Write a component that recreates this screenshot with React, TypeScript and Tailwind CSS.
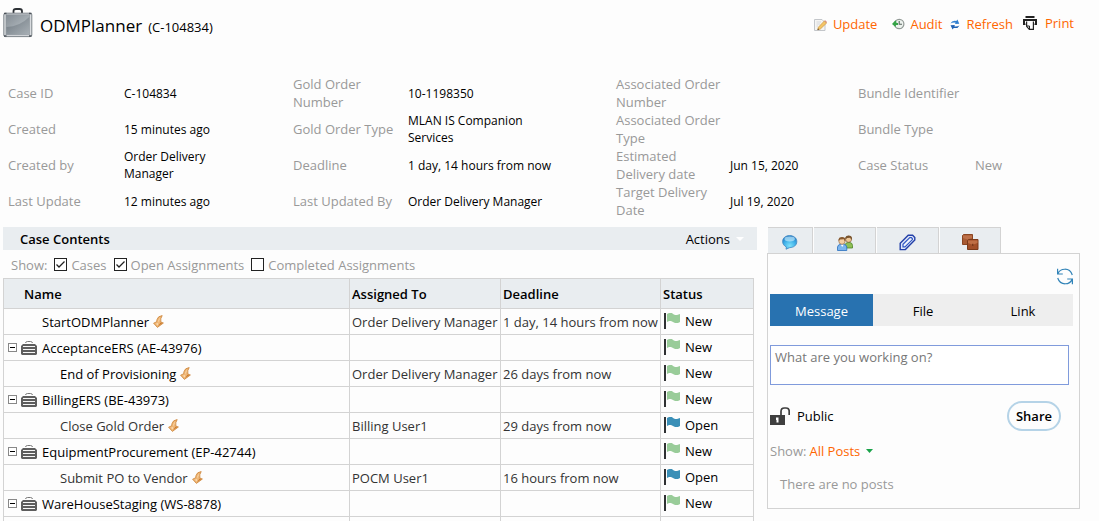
import React from "react";

type Field = { label: string; value: string; muted?: boolean };
type Row = { kind: "task" | "case"; depth?: number; name: string; soft?: boolean; assigned?: string; deadline?: string; status: "New" | "Open" };

const fields: Field[] = [
  { label: "Case ID", value: "C-104834" },
  { label: "Gold Order Number", value: "10-1198350" },
  { label: "Associated Order Number", value: "" },
  { label: "Bundle Identifier", value: "" },
  { label: "Created", value: "15 minutes ago" },
  { label: "Gold Order Type", value: "MLAN IS Companion Services" },
  { label: "Associated Order Type", value: "" },
  { label: "Bundle Type", value: "" },
  { label: "Created by", value: "Order Delivery Manager" },
  { label: "Deadline", value: "1 day, 14 hours from now" },
  { label: "Estimated Delivery date", value: "Jun 15, 2020" },
  { label: "Case Status", value: "New", muted: true },
  { label: "Last Update", value: "12 minutes ago" },
  { label: "Last Updated By", value: "Order Delivery Manager" },
  { label: "Target Delivery Date", value: "Jul 19, 2020" },
];

const rows: Row[] = [
  { kind: "task", name: "StartODMPlanner", assigned: "Order Delivery Manager", deadline: "1 day, 14 hours from now", status: "New" },
  { kind: "case", name: "AcceptanceERS (AE-43976)", status: "New" },
  { kind: "task", depth: 1, name: "End of Provisioning", assigned: "Order Delivery Manager", deadline: "26 days from now", status: "New" },
  { kind: "case", name: "BillingERS (BE-43973)", status: "New" },
  { kind: "task", depth: 1, name: "Close Gold Order", soft: true, assigned: "Billing User1", deadline: "29 days from now", status: "Open" },
  { kind: "case", name: "EquipmentProcurement (EP-42744)", status: "New" },
  { kind: "task", depth: 1, name: "Submit PO to Vendor", soft: true, assigned: "POCM User1", deadline: "16 hours from now", status: "Open" },
  { kind: "case", name: "WareHouseStaging (WS-8878)", status: "New" },
];

function Suitcase() {
  return (
    <svg width="30" height="30" viewBox="0 0 30 30" aria-hidden="true">
      <defs>
        <linearGradient id="caseBody" x1="0" y1="0" x2="1" y2="1">
          <stop offset="0" stopColor="#858d94" />
          <stop offset="0.5" stopColor="#a3abb1" />
          <stop offset="1" stopColor="#b2b9be" />
        </linearGradient>
        <linearGradient id="caseShade" x1="0" y1="0" x2="1" y2="1">
          <stop offset="0" stopColor="#5c666f" />
          <stop offset="1" stopColor="#a3abb1" />
        </linearGradient>
      </defs>
      <path d="M10.5 5V3.2Q10.5 1 13 1H16.5Q19 1 19 3.2V5" fill="none" stroke="#2d3136" strokeWidth="1.8" />
      <rect x="0.8" y="5.2" width="28" height="23.4" rx="1.6" fill="#d9dcdf" stroke="#7e858b" />
      <rect x="3" y="6.8" width="23.6" height="20" fill="url(#caseBody)" stroke="#8b939a" strokeWidth="0.6" />
      <path d="M3.4 26.4V19Q17 18.5 26.2 9V26.4Z" fill="url(#caseShade)" opacity="0.7" />
      <path d="M1 5.5H3.5M26 5.5H28.5M1 28H3.5M26 28H28.5" stroke="#4b5259" strokeWidth="1.4" />
    </svg>
  );
}

function UpdateIcon() {
  return (
    <svg width="13" height="13" viewBox="0 0 13 13" aria-hidden="true">
      <path d="M0.5 1.5H8L11 4.5V12.5H0.5Z" fill="#f5f5f3" stroke="#c3c6ca" />
      <path d="M2.5 4H7M2.5 6H6M2.5 8H4" stroke="#d5d7db" />
      <path d="M10.3 3L12.6 5L6.4 11L3.8 11.8L4.4 9.2Z" fill="#f4c566" stroke="#cf9a40" strokeWidth="0.7" />
      <path d="M3.4 12L4 10.2L5.2 11.4Z" fill="#59422b" />
      <path d="M10.2 3L11.2 2.2L13 4L12.4 5Z" fill="#d98f7c" />
    </svg>
  );
}

function AuditIcon() {
  return (
    <svg width="13" height="12" viewBox="0 0 13 12" aria-hidden="true">
      <circle cx="7.2" cy="6" r="4.7" fill="#edf2ee" stroke="#929a96" strokeWidth="1.2" />
      <path d="M7.2 3V6.2H10" fill="none" stroke="#596660" strokeWidth="1.1" />
      <path d="M3.3 2.4L4.4 3.5V5H6V7H4L3.5 9L0 6Z" fill="#35a347" />
    </svg>
  );
}

function RefreshSmall() {
  return (
    <svg width="10" height="11" viewBox="0 0 10 11" aria-hidden="true">
      <path d="M0.5 4.5Q2 1.2 6.3 2L7.4 0.6L9.3 4.7L4.8 5L5.8 3.7Q3 3 0.5 4.5Z" fill="#2f7fd0" />
      <path d="M9.5 6.4Q8 9.7 3.7 9L2.6 10.4L0.5 6.3L5 6L4.2 7.3Q7 8 9.5 6.4Z" fill="#1f62b4" />
    </svg>
  );
}

function PrintIcon() {
  return (
    <svg width="14" height="14" viewBox="0 0 14 14" aria-hidden="true">
      <path d="M2.5 0H11.5V2H2.5ZM0 3H14V9H11.5V7.5H12V5H2V7.5H2.5V9H0Z" fill="#222" />
      <path d="M3.6 5.5V10.3L6.3 13.3H10.4V5.5" fill="#fdfdfd" stroke="#222" strokeWidth="1.2" />
      <path d="M4 10H6.5V13" fill="none" stroke="#222" />
    </svg>
  );
}

function Bolt() {
  return (
    <svg width="11" height="13" viewBox="0 0 11 13" aria-hidden="true">
      <path d="M9.2 0.6Q5 1 4 4.5L3.6 6.8L0.6 8.2L4.4 12.4L10.4 8L7.8 7Q7.2 3.4 9.2 0.6Z" fill="#efb676" stroke="#cb8438" strokeWidth="0.8" />
      <path d="M7.2 2.2Q5.2 4 5.4 8L3 8.8L4.5 10.6Z" fill="#fbe0b8" />
      <path d="M7.6 7.4L9.4 8.1L5 11.3Z" fill="#c97a2c" />
    </svg>
  );
}

function CaseIcon() {
  return (
    <svg width="16" height="14" viewBox="0 0 16 14" aria-hidden="true">
      <path d="M4.5 2Q4.8 0.5 6.5 0.5H9.5Q11.2 0.5 11.5 2" fill="none" stroke="#777" />
      <path d="M2 3H14L16 5V13L15 14H1L0 13V5Z" fill="#5d5d5d" />
      <path d="M2 5.5H14M2 8.5H14M2 11.5H14" stroke="#f6f6f6" />
    </svg>
  );
}

function Flag({ status }: { status: "New" | "Open" }) {
  return (
    <svg width="17" height="16" viewBox="0 0 17 16" aria-hidden="true">
      <path d="M1 0H3V16H1Z" fill="#2f3133" />
      <path d="M4 1L6 0H9L10 1L12 2H14L17 1V9L15 10H12L10 9L8 8H6L4 9Z" fill={status === "New" ? "#99cc99" : "#3a8fb7"} />
    </svg>
  );
}

function ChatIcon() {
  return (
    <svg width="16" height="15" viewBox="0 0 16 15" aria-hidden="true">
      <defs>
        <radialGradient id="bubble" cx="0.5" cy="0.75" r="0.7">
          <stop offset="0" stopColor="#7fe2fb" />
          <stop offset="0.6" stopColor="#3fb0e8" />
          <stop offset="1" stopColor="#2780c8" />
        </radialGradient>
      </defs>
      <path d="M7.6 0.6C11.8 0.6 14.8 3 14.8 6.6C14.8 10.2 11.8 12.6 7.8 12.6L4 14.2L4.4 12C2.2 11 0.6 9 0.6 6.6C0.6 3 3.6 0.6 7.6 0.6Z" fill="url(#bubble)" stroke="#3d88c2" strokeWidth="0.8" />
      <ellipse cx="7.7" cy="4" rx="5.2" ry="2.4" fill="#d4f2fd" opacity="0.6" />
    </svg>
  );
}

function PeopleIcon() {
  return (
    <svg width="16" height="16" viewBox="0 0 16 16" aria-hidden="true">
      <path d="M8 14V10Q8.5 7.5 11 7.5H13Q15.5 8 15.5 10.5V13H9Z" fill="#8fbf55" stroke="#4c8527" strokeWidth="0.8" />
      <circle cx="11.6" cy="4.3" r="3" fill="#efc797" stroke="#73502e" strokeWidth="0.6" />
      <path d="M8.3 4.5V2.5Q9 0.5 11.5 0.5Q15 0.5 15 3.8L14.2 5L13.3 2.8L10.2 3Z" fill="#79542d" />
      <path d="M0.5 15.5V12Q1 9.5 3.5 9.3H6.5Q9.5 9.5 9.8 12V15.5Z" fill="#7bb5ee" stroke="#2a6ebe" strokeWidth="0.8" />
      <path d="M3.8 9.5L5.2 12L6.7 9.5Z" fill="#fff" />
      <circle cx="5" cy="6.1" r="3.2" fill="#f5cfa3" stroke="#885c34" strokeWidth="0.6" />
      <path d="M1.5 6V4.2Q2 2 5 2Q8.5 2 8.5 5.4L7.9 6.4L6.9 4.3L3 4.6Z" fill="#87592f" />
    </svg>
  );
}

function ClipIcon() {
  return (
    <svg width="17" height="17" viewBox="0 0 17 17" aria-hidden="true">
      <path d="M1.2 15.6V9.2L9.2 1.2H13.6L15.8 3.6V6L6.4 15.6Z" fill="#dfe6f7" stroke="#2340a8" strokeWidth="1.4" />
      <path d="M4 12.9V10.2L10.8 3.6H12.4L13.4 4.8V5.6L6 12.9Z" fill="#f0f4fc" stroke="#2f56c4" strokeWidth="1.2" />
    </svg>
  );
}

function BoxesIcon() {
  return (
    <svg width="17" height="17" viewBox="0 0 17 17" aria-hidden="true">
      <path d="M0.5 1.5L1.5 0.5H10.5V10.5H0.5Z" fill="#a85a33" stroke="#8a4522" />
      <path d="M1 1.5H10V4L5.5 5.5L1 4Z" fill="#bd7049" />
      <path d="M5.5 6.5L6.5 5.5H16V15.5H5.5Z" fill="#a24f28" stroke="#7c3a19" />
      <path d="M6 6.5H15.5V9L10.8 10.8L6 9Z" fill="#bf6f45" />
      <path d="M10.8 9.8V11.8" stroke="#5e290f" />
    </svg>
  );
}

function SyncIcon() {
  return (
    <svg width="16" height="17" viewBox="0 0 16 17" fill="none" stroke="#3284b8" strokeWidth="1.2" aria-hidden="true">
      <path d="M0.6 0.8V6H5.8M0.9 5.8C3 0.2 12.5-1.2 15.3 7" />
      <path d="M15.4 16.2V11H10.2M15.1 11.2C13 16.8 3.5 18.2 0.7 10" />
    </svg>
  );
}

function LockIcon() {
  return (
    <svg width="20" height="18" viewBox="0 0 20 18" aria-hidden="true">
      <path d="M0 8H15V18H0Z" fill="#3f3f3f" />
      <path d="M11 8V4.5Q11 1 14.3 1H16Q19.2 1 19.2 4.5V8" fill="none" stroke="#3f3f3f" strokeWidth="1.7" />
      <path d="M6 10.5H8.5V15.5H6.5V13H6Z" fill="#fff" />
    </svg>
  );
}

function Check({ label, checked }: { label: string; checked?: boolean }) {
  return (
    <label className="flex items-center gap-1">
      <span className="relative flex size-[13px]">
        <input type="checkbox" defaultChecked={checked} className="peer size-[13px] appearance-none border border-[#222] bg-white" />
        <svg viewBox="0 0 13 13" className="pointer-events-none absolute inset-0 hidden peer-checked:block" aria-hidden="true">
          <path d="M2.5 6.5L5 9L10.5 3.5" fill="none" stroke="#222" strokeWidth="1.3" />
        </svg>
      </span>
      {label}
    </label>
  );
}

const cell = "h-[26px] border border-[#d3d3d3] p-0 pl-[2px] text-left whitespace-nowrap";
const head = "h-[30px] border border-[#d3d3d3] bg-[#e9edf0] p-0 pl-[2px] text-left font-semibold";
const tab = "flex h-[26px] items-center justify-center border-t border-r border-[#d3d3d3] bg-[#e9edf0] pt-1";

export default function App() {
  return (
    <div className="h-screen overflow-hidden bg-[#fdfdfd] pl-[3px] font-['Open_Sans',sans-serif] text-[13px] leading-[18px] text-black">
      <header className="flex h-[75px] items-start justify-between pr-[25px]">
        <div className="flex items-start gap-[7px] pt-2">
          <Suitcase />
          <div className="flex items-baseline gap-[6px] pt-[6px]">
            <h1 className="text-[17px] leading-[24px]">ODMPlanner</h1>
            <span>(C-104834)</span>
          </div>
        </div>
        <nav className="flex items-start gap-2 pt-[15px] text-[#ff6600]">
          <a href="#update" className="mr-[7px] flex items-center gap-[6px]"><UpdateIcon />Update</a>
          <a href="#audit" className="flex items-center gap-[5px]"><AuditIcon />Audit</a>
          <a href="#refresh" className="mr-[2px] flex items-center gap-[6px]"><RefreshSmall />Refresh</a>
          <a href="#print" className="-mt-px flex items-center gap-2"><PrintIcon />Print</a>
        </nav>
      </header>

      <dl className="grid auto-rows-[36px] grid-cols-[116fr_169fr_115fr_208fr_114fr_128fr_117fr_124fr] items-center pl-[5px]">
        {fields.map((f) => (
          <React.Fragment key={f.label}>
            <dt className="pr-1 text-[#999]">{f.label}</dt>
            <dd className={f.muted ? "pr-12 text-[#999]" : "pr-12 text-[12px] leading-[17px] empty:pr-0"}>{f.value}</dd>
          </React.Fragment>
        ))}
      </dl>

      <main className="mt-2 flex items-start gap-[10px] pr-[19px]">
        <section className="min-w-0 flex-1">
          <div className="flex h-[23px] items-center justify-between bg-[#e9edf0] pr-[13px] pl-[17px]">
            <h2 className="font-semibold">Case Contents</h2>
            <button type="button" className="flex items-center gap-[6px]">
              Actions
              <svg width="8" height="4" viewBox="0 0 8 4" aria-hidden="true"><path d="M0 0H8L4 4Z" fill="#fff" /></svg>
            </button>
          </div>
          <div className="flex h-[28px] items-center gap-[7px] pt-px pl-2 text-[#999]">
            <span>Show:</span>
            <Check label="Cases" checked />
            <Check label="Open Assignments" checked />
            <Check label="Completed Assignments" />
          </div>
          <div className="pr-[3px]">
            <table className="w-full table-fixed border-collapse">
              <colgroup>
                <col />
                <col className="w-[151px]" />
                <col className="w-[160px]" />
                <col className="w-[93px]" />
              </colgroup>
              <thead>
                <tr>
                  <th className={head}><span className="pl-[18px]">Name</span></th>
                  <th className={head}>Assigned To</th>
                  <th className={head}>Deadline</th>
                  <th className={head}>Status</th>
                </tr>
              </thead>
              <tbody>
                {rows.map((r) => (
                  <tr key={r.name}>
                    <td className={cell}>
                      {r.kind === "case" ? (
                        <div className="flex items-center pl-[2px]">
                          <button type="button" aria-label="Collapse" className="mr-1 flex size-[9px] items-center justify-center border border-[#888] bg-white">
                            <span className="h-px w-[5px] bg-black" />
                          </button>
                          <CaseIcon />
                          <span className="pl-[5px]">{r.name}</span>
                        </div>
                      ) : (
                        <div className={r.depth ? "flex items-center gap-[4px] pl-[54px]" : "flex items-center gap-[4px] pl-[36px]"}>
                          <span className={r.soft ? "text-[#333]" : ""}>{r.name}</span>
                          <Bolt />
                        </div>
                      )}
                    </td>
                    <td className={`${cell} text-[#333]`}>{r.assigned}</td>
                    <td className={`${cell} text-[#333]`}>{r.deadline}</td>
                    <td className={cell}>
                      <div className="flex items-center gap-[5px] pb-[2px]"><Flag status={r.status} />{r.status}</div>
                    </td>
                  </tr>
                ))}
                <tr><td className={cell} /><td className={cell} /><td className={cell} /><td className={cell} /></tr>
              </tbody>
            </table>
          </div>
        </section>

        <aside className="w-[313px] shrink-0">
          <div className="flex gap-px pl-px">
            <button type="button" aria-label="Messages" className={`${tab} w-[45px]`}><ChatIcon /></button>
            <button type="button" aria-label="People" className={`${tab} w-[62px]`}><PeopleIcon /></button>
            <button type="button" aria-label="Attachments" className={`${tab} w-[62px]`}><ClipIcon /></button>
            <button type="button" aria-label="Related cases" className={`${tab} w-[61px]`}><BoxesIcon /></button>
          </div>
          <div className="flex flex-col border border-[#d3d3d3] pt-[14px] pr-[6px] pb-[15px] pl-[2px]">
            <button type="button" aria-label="Reload" className="self-end"><SyncIcon /></button>
            <div className="mt-[9px] grid h-8 grid-cols-[103fr_100fr_100fr] bg-[#eee]">
              <button type="button" className="bg-[#2872b0] pt-px text-white">Message</button>
              <button type="button" className="pt-px">File</button>
              <button type="button" className="pt-px">Link</button>
            </div>
            <textarea aria-label="Message" placeholder="What are you working on?" className="mt-[19px] mr-1 h-10 resize-none border border-[#809bdc] bg-white px-1 py-[2px] placeholder:text-[#777]" />
            <div className="mt-4 flex items-center justify-between pr-3">
              <span className="flex items-center gap-[7px]"><LockIcon />Public</span>
              <button type="button" className="h-[30px] w-[54px] rounded-full border-2 border-[#b5d3e7] font-semibold">Share</button>
            </div>
            <div className="mt-[11px] flex items-center gap-[3px] text-[#999]">
              Show:
              <button type="button" className="flex items-center gap-[6px] text-[#ff6600]">
                All Posts
                <svg width="7" height="4" viewBox="0 0 7 4" aria-hidden="true"><path d="M0 0H7L3.5 4Z" fill="#1aa34a" /></svg>
              </button>
            </div>
            <p className="mt-[15px] pl-[10px] text-[#999]">There are no posts</p>
          </div>
        </aside>
      </main>
    </div>
  );
}
